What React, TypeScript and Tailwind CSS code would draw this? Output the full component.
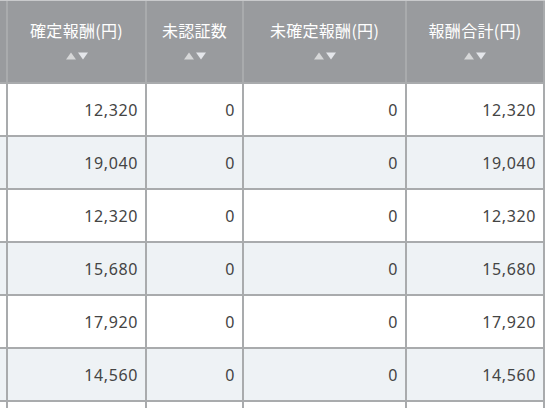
import React from "react";

const headers = ["", "確定報酬(円)", "未認証数", "未確定報酬(円)", "報酬合計(円)"];
const rows = [
  ["12,320", "0", "0", "12,320"],
  ["19,040", "0", "0", "19,040"],
  ["12,320", "0", "0", "12,320"],
  ["15,680", "0", "0", "15,680"],
  ["17,920", "0", "0", "17,920"],
  ["14,560", "0", "0", "14,560"],
  ["", "", "", ""],
];

function SortArrows() {
  return (
    <div className="flex items-center gap-[2px]">
      <svg width="10" height="8" viewBox="0 0 10 8">
        <polygon points="5,0.5 10,7.5 0,7.5" fill="#d6d7d8" />
      </svg>
      <svg width="10" height="8" viewBox="0 0 10 8">
        <polygon points="0,0.5 10,0.5 5,7.5" fill="#e4e6ea" />
      </svg>
    </div>
  );
}

export default function App() {
  return (
    <div
      className="w-[550px] h-[408px] overflow-hidden bg-white"
      style={{ fontFamily: '"Noto Sans CJK JP", "Noto Sans", sans-serif' }}
    >
      <div className="grid grid-cols-[6px_137px_95px_161px_136px] gap-[2px] bg-[#a9abad] border-t border-[#c9cacc] w-[545px] pr-[2px]">
        {headers.map((h, i) => (
          <div
            key={"h" + i}
            className="h-[81px] bg-[#999b9e] flex flex-col items-center justify-start pt-[15px]"
          >
            {h && (
              <>
                <div className="text-[16px] leading-[28px] text-white whitespace-nowrap tracking-[0.3px]">
                  {h}
                </div>
                <div className="mt-[8px]">
                  <SortArrows />
                </div>
              </>
            )}
          </div>
        ))}
        {rows.map((r, ri) => (
          <React.Fragment key={"r" + ri}>
            <div className={ri % 2 === 1 ? "h-[51px] bg-[#eef2f5]" : "h-[51px] bg-white"} />
            {r.map((c, ci) => (
              <div
                key={ci}
                className={
                  (ri % 2 === 1 ? "bg-[#eef2f5] " : "bg-white ") +
                  "h-[51px] flex items-center justify-end pr-[7px] text-[16px] tracking-[0.6px] text-[#444]"
                }
                style={{ fontFamily: '"Noto Sans", "Noto Sans CJK JP", sans-serif' }}
              >
                {c}
              </div>
            ))}
          </React.Fragment>
        ))}
      </div>
    </div>
  );
}
